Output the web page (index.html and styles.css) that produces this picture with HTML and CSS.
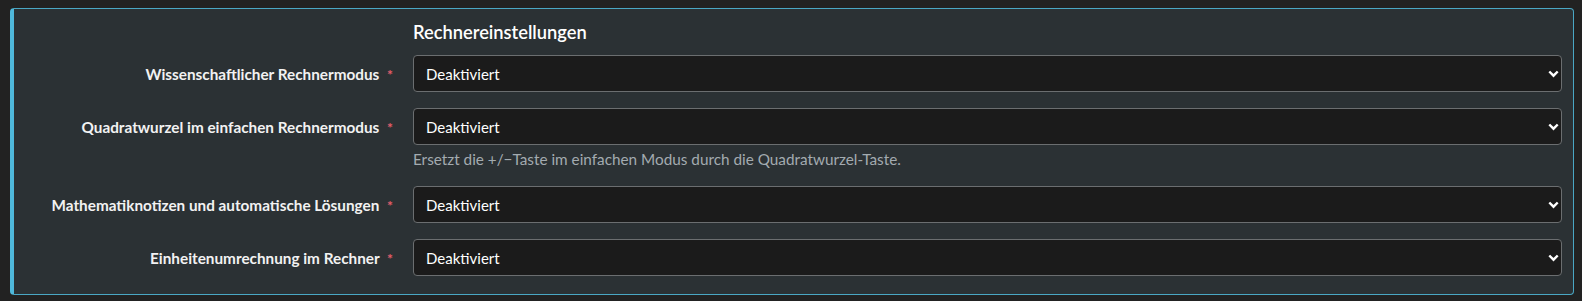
FILE: index.html
```html
<!DOCTYPE html>
<html lang="de">
<head>
    <meta charset="UTF-8">
    <meta name="viewport" content="width=device-width, initial-scale=1.0">
    <title>Rechnereinstellungen</title>
    <link rel="stylesheet" href="styles.css">
</head>
<body>

<div class="card">
    <div class="row">
        <div class="label-col"></div>
        <h2 class="title">Rechnereinstellungen</h2>
    </div>

    <form id="rechnerForm" class="settings">
        <div class="row">
            <label class="label-col" for="wissenschaftlich">Wissenschaftlicher Rechnermodus <span class="req">*</span></label>
            <div class="field">
                <div class="select-wrap">
                    <select id="wissenschaftlich" name="wissenschaftlich">
                        <option value="0">Deaktiviert</option>
                        <option value="1">Aktiviert</option>
                    </select>
                    <svg class="chevron" width="11" height="8" viewBox="0 0 11 8"><path d="M1.3 1.5 L5.5 5.7 L9.7 1.5" fill="none" stroke="#fff" stroke-width="2.4"/></svg>
                </div>
            </div>
        </div>

        <div class="row">
            <label class="label-col" for="quadratwurzel">Quadratwurzel im einfachen Rechnermodus <span class="req">*</span></label>
            <div class="field">
                <div class="select-wrap">
                    <select id="quadratwurzel" name="quadratwurzel">
                        <option value="0">Deaktiviert</option>
                        <option value="1">Aktiviert</option>
                    </select>
                    <svg class="chevron" width="11" height="8" viewBox="0 0 11 8"><path d="M1.3 1.5 L5.5 5.7 L9.7 1.5" fill="none" stroke="#fff" stroke-width="2.4"/></svg>
                </div>
            </div>
        </div>
        <div class="row help-row">
            <div class="label-col"></div>
            <div class="help">Ersetzt die +/−Taste im einfachen Modus durch die Quadratwurzel-Taste.</div>
        </div>

        <div class="row">
            <label class="label-col" for="notizen">Mathematiknotizen und automatische Lösungen <span class="req">*</span></label>
            <div class="field">
                <div class="select-wrap">
                    <select id="notizen" name="notizen">
                        <option value="0">Deaktiviert</option>
                        <option value="1">Aktiviert</option>
                    </select>
                    <svg class="chevron" width="11" height="8" viewBox="0 0 11 8"><path d="M1.3 1.5 L5.5 5.7 L9.7 1.5" fill="none" stroke="#fff" stroke-width="2.4"/></svg>
                </div>
            </div>
        </div>

        <div class="row">
            <label class="label-col" for="einheiten">Einheitenumrechnung im Rechner <span class="req">*</span></label>
            <div class="field">
                <div class="select-wrap">
                    <select id="einheiten" name="einheiten">
                        <option value="0">Deaktiviert</option>
                        <option value="1">Aktiviert</option>
                    </select>
                    <svg class="chevron" width="11" height="8" viewBox="0 0 11 8"><path d="M1.3 1.5 L5.5 5.7 L9.7 1.5" fill="none" stroke="#fff" stroke-width="2.4"/></svg>
                </div>
            </div>
        </div>
    </form>
</div>

</body>
</html>
```

FILE: styles.css
```css
body {
    font-family: Lato, "Liberation Sans", sans-serif;
    background-color: #222222;
    color: #ffffff;
    margin: 0;
    padding: 8px 8px 0 10px;
}
.card {
    background: #2b3134;
    border: 1px solid #4aa7c4;
    border-left: 4px solid #4fb8db;
    border-radius: 4px;
    padding: 10px 11px 18px 0;
}
.row {
    display: flex;
    align-items: center;
}
.label-col {
    flex: 0 0 399px;
    box-sizing: border-box;
    padding-right: 20px;
    text-align: right;
    font-size: 15.3px;
    font-weight: bold;
    color: #f2f2f2;
}
.title {
    margin: 0 0 9px 0;
    font-size: 18.3px;
    font-weight: 600;
    line-height: 27px;
    color: #ffffff;
}
.settings {
    display: flex;
    flex-direction: column;
    gap: 16px;
}
.help-row {
    margin-top: -12px;
}
.req {
    color: #e35d6a;
    margin-left: 4px;
    font-size: 14px;
}
.field {
    flex: 1;
}
.select-wrap {
    position: relative;
}
select {
    appearance: none;
    -webkit-appearance: none;
    display: block;
    width: 100%;
    height: 37px;
    padding: 0 30px 0 12px;
    background-color: #1b1b1b;
    color: #ffffff;
    border: 1px solid #6b6e70;
    border-radius: 4px;
    font-family: inherit;
    font-size: 15px;
}
.chevron {
    position: absolute;
    right: 3px;
    top: 15px;
    pointer-events: none;
}
.help {
    font-size: 15.3px;
    line-height: 21px;
    color: #a3abb0;
}
```
